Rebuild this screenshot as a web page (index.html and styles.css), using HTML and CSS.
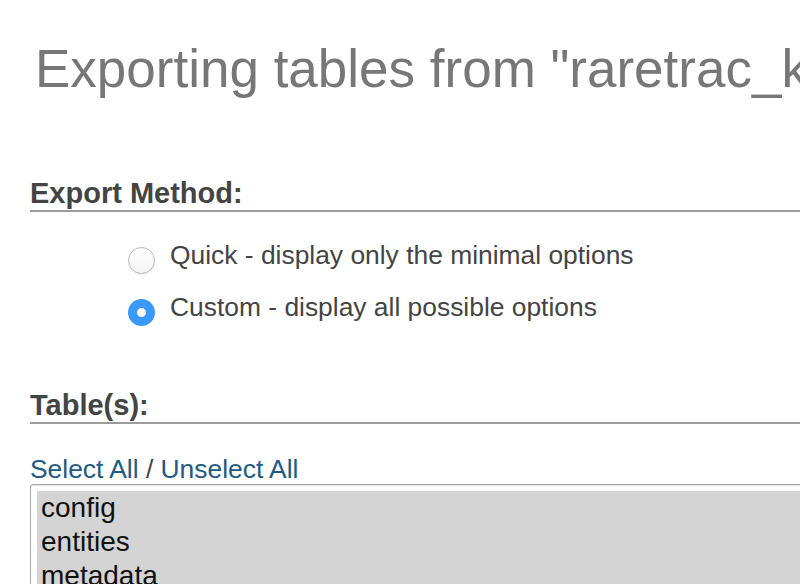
FILE: index.html
```html
<html>

<head>
  <meta charset="UTF-8">
  <title>Export tables</title>
  <meta name="viewport" content="width=device-width, initial-scale=1.0">
  <link rel="stylesheet" href="styles.css">
</head>

<body>
  <h1 class="page-title">Exporting tables from "raretrac_kb"</h1>

  <!-- export method -->
  <h2 class="section-title">Export Method:</h2>
  <div class="choices">
    <label class="choice">
      <input type="radio" name="quick_or_custom" value="quick">
      <span>Quick - display only the minimal options</span>
    </label>
    <label class="choice">
      <input type="radio" name="quick_or_custom" value="custom" checked>
      <span>Custom - display all possible options</span>
    </label>
  </div>

  <!-- tables -->
  <h2 class="section-title section-tables">Table(s):</h2>
  <div class="select-links">
    <a href="#" id="select-all">Select All</a> / <a href="#" id="unselect-all">Unselect All</a>
  </div>
  <div class="table-list">
    <div class="table-item selected">config</div>
    <div class="table-item selected">entities</div>
    <div class="table-item selected">metadata</div>
    <div class="table-item selected">users</div>
  </div>
</body>

</html>
```

FILE: styles.css
```css
* {
  font-family: "Liberation Sans", Arial, Helvetica, sans-serif;
  margin: 0;
  padding: 0;
  box-sizing: border-box;
}

body {
  background-color: #fff;
  color: #444;
  width: 800px;
  height: 584px;
  overflow: hidden;
  padding-left: 30px;
}

.page-title {
  font-size: 53px;
  font-weight: normal;
  line-height: 60px;
  color: #777;
  white-space: nowrap;
  padding-top: 39px;
  padding-left: 5px;
}

.section-title {
  font-size: 29px;
  font-weight: bold;
  line-height: 32px;
  color: #444;
  margin-top: 78px;
  padding-bottom: 1px;
  border-bottom: 2px solid #9c9c9c;
}

.section-tables {
  margin-top: 56px;
}

.choices {
  margin-top: 17px;
  padding-left: 98px;
}

.choice {
  display: flex;
  align-items: center;
  height: 52px;
  font-size: 26.4px;
  line-height: 30px;
  color: #444;
}

.choice input {
  appearance: none;
  -webkit-appearance: none;
  width: 27px;
  height: 27px;
  border-radius: 50%;
  margin: 10px 15px 0 0;
  border: 1px solid #b8b8b8;
  background: linear-gradient(#fff, #f4f4f4);
  box-shadow: 0 1px 1px rgba(0, 0, 0, 0.08);
  flex-shrink: 0;
}

.choice input:checked {
  border: none;
  background: radial-gradient(circle, #fff 0, #fff 4px, #3b99fc 5px);
  box-shadow: none;
}

.select-links {
  margin-top: 30px;
  font-size: 26.4px;
  line-height: 30px;
  color: #444;
}

.select-links a {
  color: #235a81;
  text-decoration: none;
}

.table-list {
  width: 900px;
  height: 200px;
  padding: 6px;
  border: 1px solid #a9a9a9;
  border-radius: 3px;
  box-shadow: inset 0 1px 1px rgba(0, 0, 0, 0.12);
  background-color: #fff;
}

.table-item {
  font-size: 28px;
  line-height: 34px;
  color: #111;
  padding-left: 4px;
}

.table-item.selected {
  background-color: #d4d4d4;
}
```
